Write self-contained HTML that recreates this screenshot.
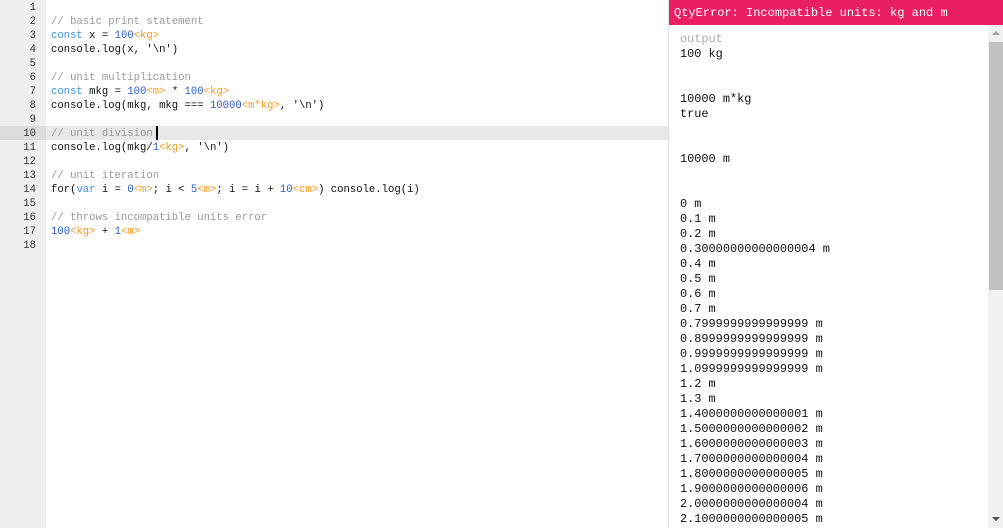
<!DOCTYPE html>
<html><head><style>
html,body{margin:0;padding:0;width:1003px;height:528px;overflow:hidden;background:#fff;}
.gut{position:absolute;left:0;top:0;width:46px;height:528px;background:#efefef;}
.code{position:absolute;left:0;top:1px;font-family:"Liberation Mono",monospace;font-size:10.6px;line-height:14px;}
.ln{position:absolute;left:0;width:36px;text-align:right;color:#333;}
.tx{position:absolute;left:51px;white-space:pre;color:#111;}
.hl{position:absolute;left:46px;top:126px;width:622px;height:14px;background:#e8e8e8;}
.hlg{position:absolute;left:0;top:126px;width:46px;height:14px;background:#dcdcdc;}
.c{color:#999}.k{color:#3b8fe0}.n{color:#2a5ccf}.u{color:#f59a23}
.panel{position:absolute;left:668px;top:0;width:335px;height:528px;border-left:1px solid #e2e2e2;background:#fff;}
.err{position:absolute;left:0;top:0;width:335px;height:25px;background:#ea1f63;color:#fff;font-family:"Liberation Mono",monospace;font-size:12px;line-height:26px;padding-left:5px;box-sizing:border-box;}
.out{position:absolute;left:11px;top:32px;font-family:"Liberation Mono",monospace;font-size:11.9px;line-height:15px;white-space:pre;color:#111;}
.sb{position:absolute;left:319px;top:25px;width:16px;height:503px;background:#f1f1f1;}
.th{position:absolute;left:1px;top:17px;width:14px;height:248px;background:#c1c1c1;}
.cur{position:absolute;left:156px;top:126px;width:2px;height:14px;background:#000;}
</style></head><body>
<div class="gut"></div>
<div class="hl"></div><div class="hlg"></div>
<div class="code">
<div class="ln" style="top:0">1</div>
<div class="ln" style="top:14px">2</div>
<div class="ln" style="top:28px">3</div>
<div class="ln" style="top:42px">4</div>
<div class="ln" style="top:56px">5</div>
<div class="ln" style="top:70px">6</div>
<div class="ln" style="top:84px">7</div>
<div class="ln" style="top:98px">8</div>
<div class="ln" style="top:112px">9</div>
<div class="ln" style="top:126px">10</div>
<div class="ln" style="top:140px">11</div>
<div class="ln" style="top:154px">12</div>
<div class="ln" style="top:168px">13</div>
<div class="ln" style="top:182px">14</div>
<div class="ln" style="top:196px">15</div>
<div class="ln" style="top:210px">16</div>
<div class="ln" style="top:224px">17</div>
<div class="ln" style="top:238px">18</div>
<div class="tx" style="top:14px"><span class="c">// basic print statement</span></div>
<div class="tx" style="top:28px"><span class="k">const</span> x = <span class="n">100</span><span class="u">&lt;kg&gt;</span></div>
<div class="tx" style="top:42px">console.log(x, '\n')</div>
<div class="tx" style="top:70px"><span class="c">// unit multiplication</span></div>
<div class="tx" style="top:84px"><span class="k">const</span> mkg = <span class="n">100</span><span class="u">&lt;m&gt;</span> * <span class="n">100</span><span class="u">&lt;kg&gt;</span></div>
<div class="tx" style="top:98px">console.log(mkg, mkg === <span class="n">10000</span><span class="u">&lt;m*kg&gt;</span>, '\n')</div>
<div class="tx" style="top:126px"><span class="c">// unit division</span></div>
<div class="tx" style="top:140px">console.log(mkg/<span class="n">1</span><span class="u">&lt;kg&gt;</span>, '\n')</div>
<div class="tx" style="top:168px"><span class="c">// unit iteration</span></div>
<div class="tx" style="top:182px">for(<span class="k">var</span> i = <span class="n">0</span><span class="u">&lt;m&gt;</span>; i &lt; <span class="n">5</span><span class="u">&lt;m&gt;</span>; i = i + <span class="n">10</span><span class="u">&lt;cm&gt;</span>) console.log(i)</div>
<div class="tx" style="top:210px"><span class="c">// throws incompatible units error</span></div>
<div class="tx" style="top:224px"><span class="n">100</span><span class="u">&lt;kg&gt;</span> + <span class="n">1</span><span class="u">&lt;m&gt;</span></div>
</div>
<div class="cur"></div>
<div class="panel">
<div class="err">QtyError: Incompatible units: kg and m</div>
<div class="out"><span style="color:#aaa">output</span>
100 kg


10000 m*kg
true


10000 m


0 m
0.1 m
0.2 m
0.30000000000000004 m
0.4 m
0.5 m
0.6 m
0.7 m
0.7999999999999999 m
0.8999999999999999 m
0.9999999999999999 m
1.0999999999999999 m
1.2 m
1.3 m
1.4000000000000001 m
1.5000000000000002 m
1.6000000000000003 m
1.7000000000000004 m
1.8000000000000005 m
1.9000000000000006 m
2.0000000000000004 m
2.1000000000000005 m</div>
<div class="sb"><div class="th"></div>
<div style="position:absolute;left:4px;top:6px;width:0;height:0;border-left:4px solid transparent;border-right:4px solid transparent;border-bottom:4px solid #a3a3a3"></div>
<div style="position:absolute;left:4px;top:492px;width:0;height:0;border-left:4px solid transparent;border-right:4px solid transparent;border-top:4px solid #505050"></div>
</div>
</div>
</body></html>
